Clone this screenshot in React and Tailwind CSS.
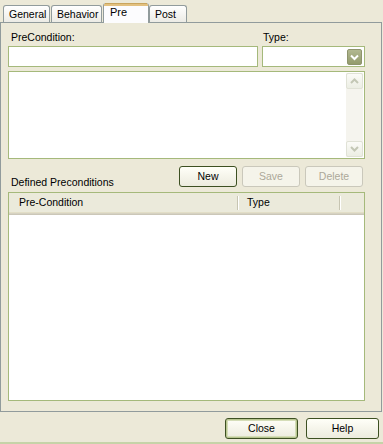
export default function App() {
  const font = { fontFamily: '"Liberation Sans", Arial, sans-serif' };
  return (
    <div
      className="w-[383px] h-[444px] bg-[#ece9d8] flex flex-col text-[10.5px] leading-[13px] text-black overflow-hidden"
      style={font}
    >
      {/* tabs */}
      <div className="h-[22px] flex items-end pl-[3px] relative z-10">
        <Tab label="General" w="w-[47px]" />
        <div className="w-[1px]" />
        <Tab label="Behavior" w="w-[51px]" />
        <div className="w-[1px]" />
        <div className="w-[46px] h-[20px] mb-[-1px] bg-[#fcfcfe] border-x border-[#919b9c] rounded-t-[3px] flex flex-col">
          <div className="h-[1px] bg-[#c9a55e] mx-[1px]" />
          <div className="h-[2px] bg-[#e2c07f]" />
          <div className="pl-[6px] text-[11px]">Pre</div>
        </div>
        <Tab label="Post" w="w-[38px]" />
      </div>

      {/* panel */}
      <div className="w-[382px] h-[390px] border border-[#919b9c] bg-[#ece9d8] pl-[7px] pr-[16px] flex flex-col">
        <div className="flex pt-[8px] h-[23px]">
          <div className="w-[254px] pl-[3px]">PreCondition:</div>
          <div className="pl-[1px]">Type:</div>
        </div>
        <div className="flex gap-[4px]">
          <div className="w-[250px] h-[21px] bg-white border border-[#a5b97b]" />
          <div className="w-[103px] h-[21px] bg-white border border-[#a5b97b] flex justify-end items-start pt-[2px] pr-[2px]">
            <div className="w-[15px] h-[16px] rounded-[2px] bg-gradient-to-b from-[#b2b891] to-[#939b6c] border border-[#8e946d] flex items-center justify-center">
              <svg width="9" height="7" viewBox="0 0 9 7">
                <path d="M1 1.5 L4.5 5 L8 1.5" fill="none" stroke="white" strokeWidth="2" />
              </svg>
            </div>
          </div>
        </div>
        <div className="mt-[4px] w-[357px] h-[88px] bg-white border border-[#a5b97b] flex justify-end p-[1px]">
          <div className="w-[17px] h-full bg-[#f5f4ee] flex flex-col justify-between">
            <ScrollArrow up />
            <ScrollArrow />
          </div>
        </div>

        <div className="mt-[7px] flex items-end pr-[2px]">
          <div className="flex-1 pl-[3px] translate-y-[2px]">Defined Preconditions</div>
          <div className="flex gap-[5px]">
            <Btn label="New" w="w-[58px]" />
            <Btn label="Save" w="w-[58px]" disabled />
            <Btn label="Delete" w="w-[58px]" disabled />
          </div>
        </div>

        <div className="mt-[5px] w-[357px] h-[209px] bg-white border border-[#a5b97b] flex flex-col">
          <div className="h-[19px] bg-[#ebeadb] flex items-center">
            <div className="w-[228px] pl-[10px] h-full flex items-center">Pre-Condition</div>
            <div className="w-[1px] h-[14px] bg-[#c7c5b2]" />
            <div className="w-[1px] h-[14px] bg-white" />
            <div className="w-[100px] pl-[8px] h-full flex items-center">Type</div>
            <div className="w-[1px] h-[14px] bg-[#c7c5b2]" />
            <div className="w-[1px] h-[14px] bg-white" />
          </div>
          <div className="h-[1px] bg-[#e2dec7]" />
          <div className="h-[1px] bg-[#d6d2c2]" />
          <div className="h-[1px] bg-[#cbc7b8]" />
        </div>
      </div>

      {/* bottom buttons */}
      <div className="mt-[6px] flex justify-end gap-[8px] pr-[4px]">
        <Btn label="Close" w="w-[73px]" def />
        <Btn label="Help" w="w-[73px]" />
      </div>
      <div className="mt-[3px] h-[2px] bg-[#c6d3a8]" />
    </div>
  );
}

function Tab({ label, w }) {
  return (
    <div
      className={`${w} h-[17px] bg-gradient-to-b from-white to-[#ecebe5] border border-b-0 border-[#919b9c] rounded-t-[3px] pl-[5px] pt-[2px] whitespace-nowrap overflow-hidden`}
    >
      {label}
    </div>
  );
}

function ScrollArrow({ up }) {
  return (
    <div className="w-[17px] h-[16px] rounded-[2px] border border-[#e0e2d6] bg-gradient-to-b from-[#fbfbf7] to-[#eceee4] flex items-center justify-center">
      <svg width="9" height="6" viewBox="0 0 9 6">
        <path
          d={up ? "M1 5 L4.5 1.5 L8 5" : "M1 1 L4.5 4.5 L8 1"}
          fill="none"
          stroke="#c3c7b5"
          strokeWidth="2"
        />
      </svg>
    </div>
  );
}

function Btn({ label, w, disabled, def }) {
  if (disabled) {
    return (
      <div
        className={`${w} h-[21px] rounded-[3px] border border-[#cac8bb] bg-[#f5f4ea] text-[#aca899] flex items-center justify-center`}
      >
        {label}
      </div>
    );
  }
  return (
    <div
      className={`${w} h-[21px] rounded-[3px] border border-[#3d5022] bg-gradient-to-b from-[#fffff8] to-[#ecebde] flex items-center justify-center ${
        def ? "shadow-[inset_0_0_0_1px_#b7c58f,inset_0_0_0_2px_#d5ddb8]" : ""
      }`}
    >
      {label}
    </div>
  );
}
